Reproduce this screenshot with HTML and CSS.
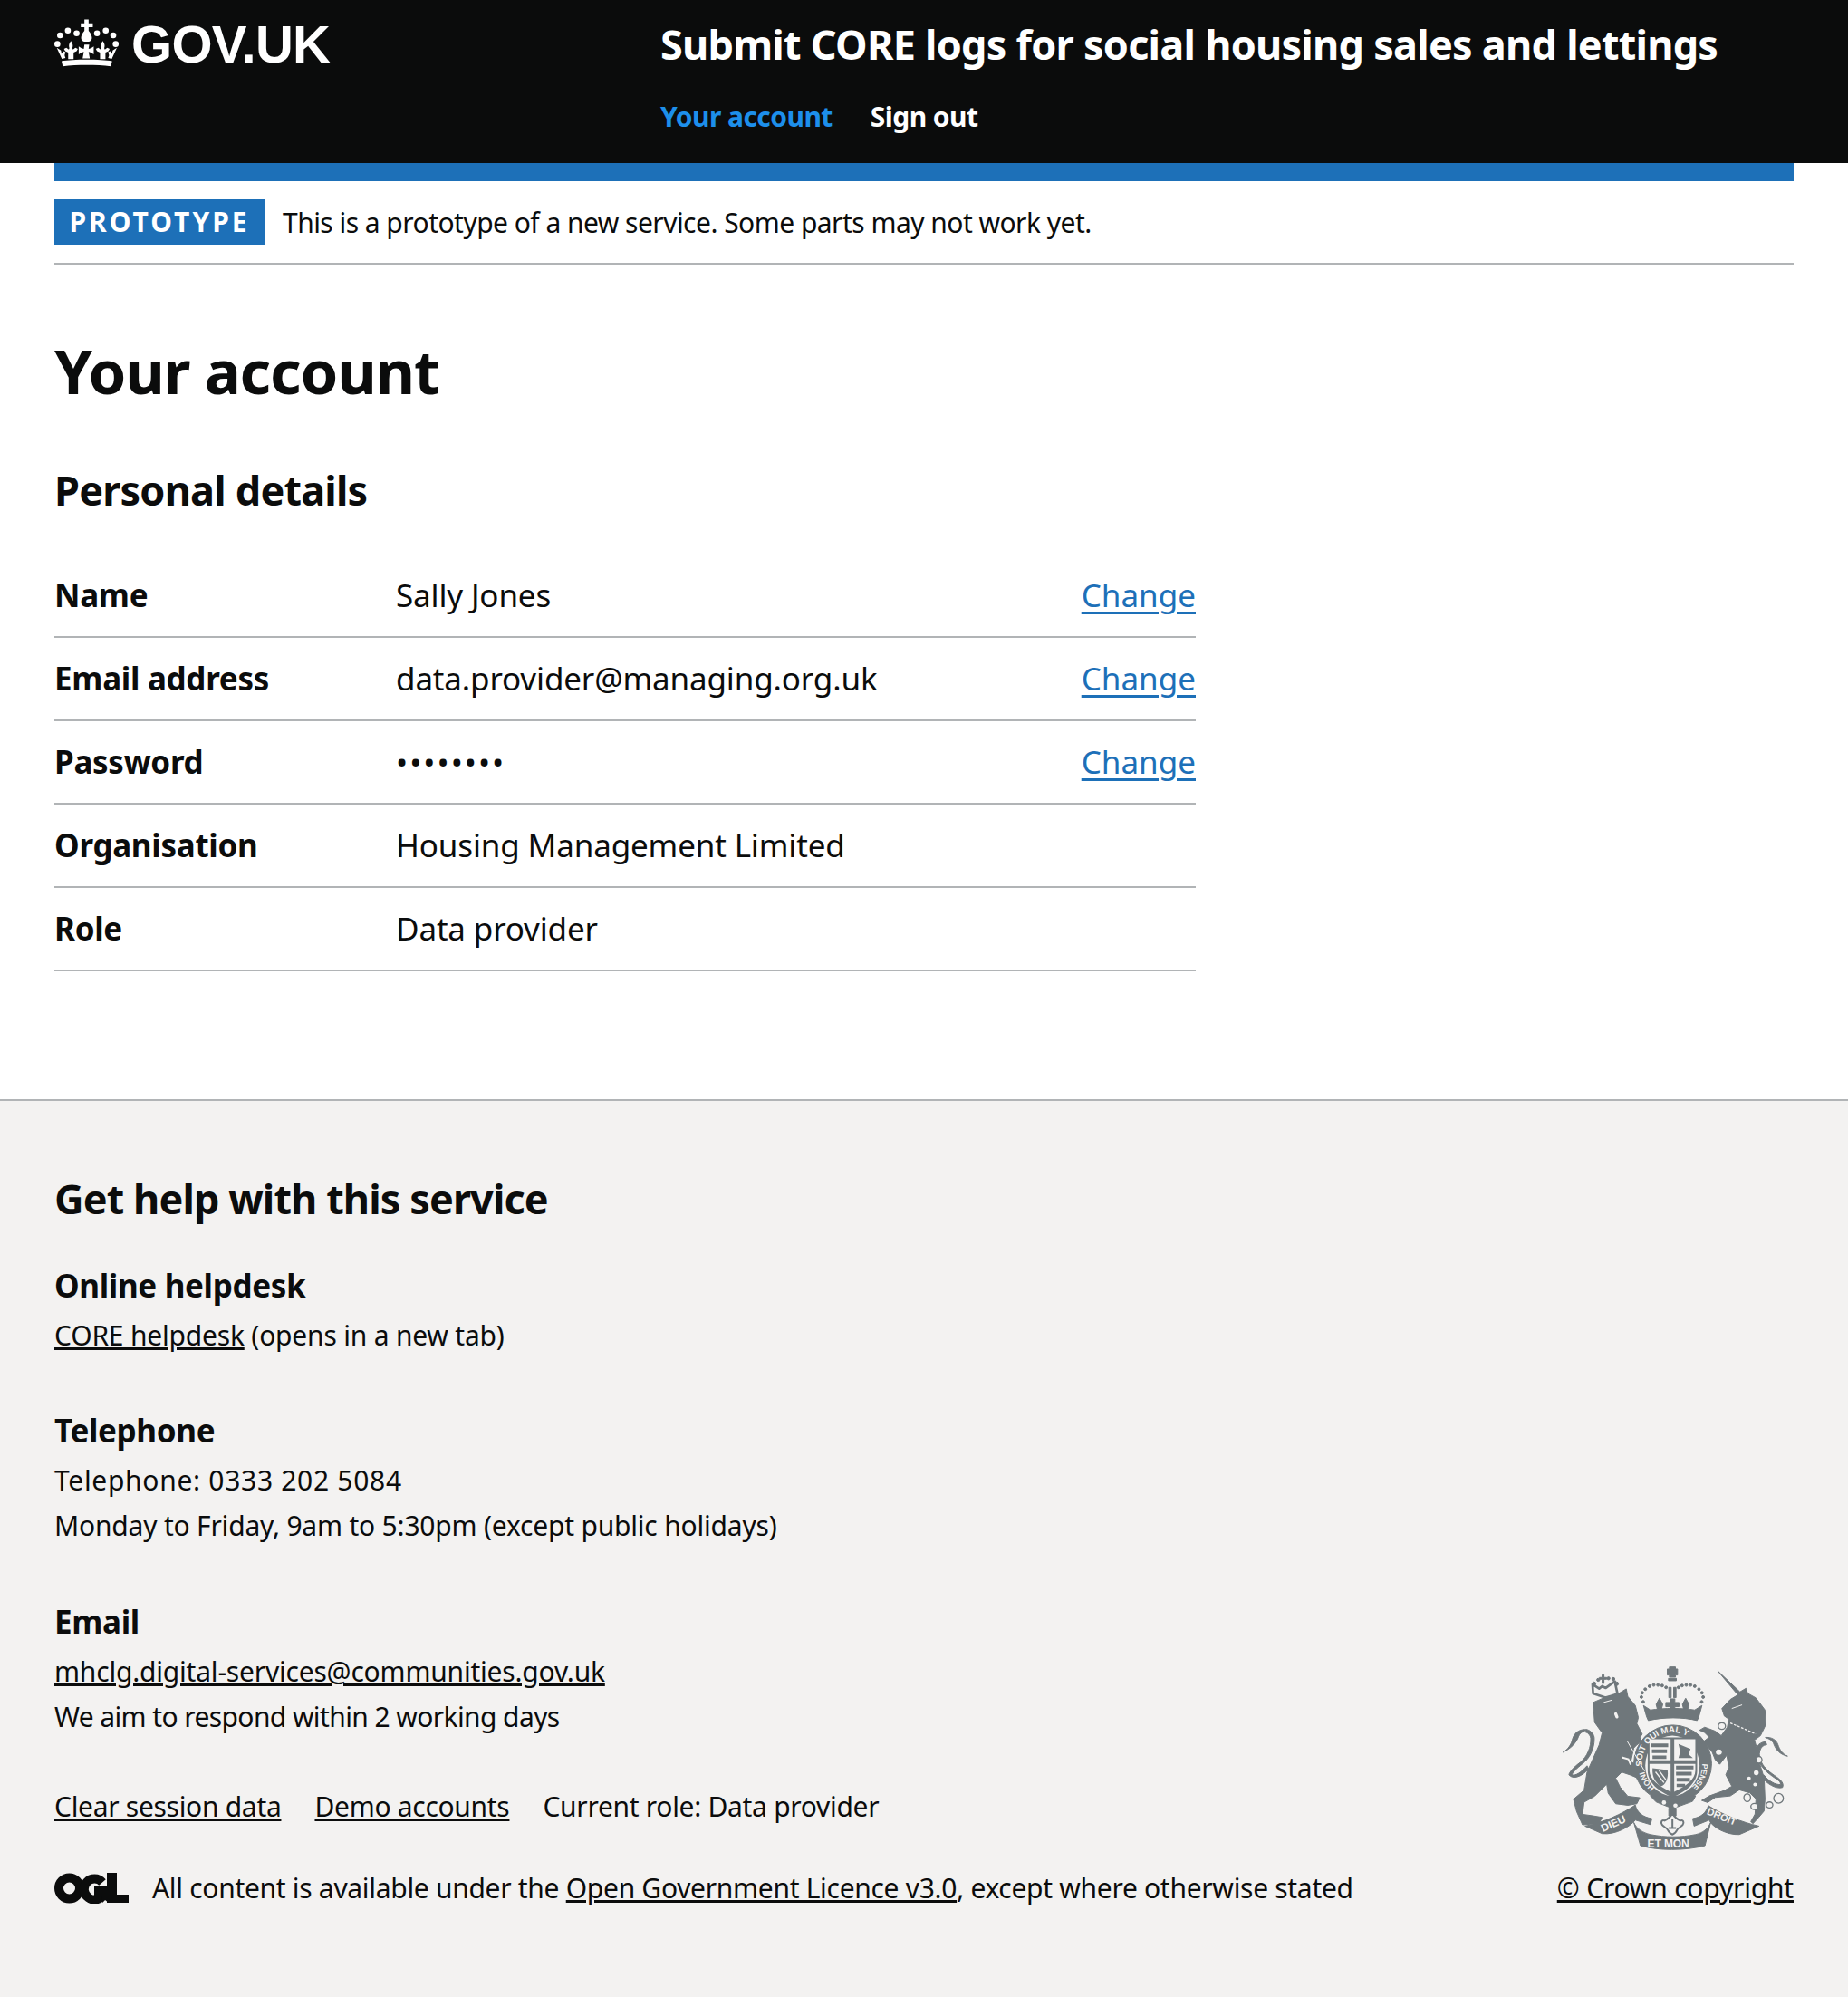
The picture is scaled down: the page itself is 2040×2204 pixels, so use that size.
FILE: index.html
```html
<!DOCTYPE html>
<html lang="en">
<head>
<meta charset="UTF-8">
<title>Your account - Submit CORE logs</title>
<link rel="stylesheet" href="styles.css">
</head>
<body>

<header class="header">
  <a class="logo" href="#">
    <svg class="logo-crown" viewBox="60 62 220 162" width="73" height="54" aria-hidden="true">
      <g fill="#fff">
        <circle cx="70" cy="148" r="10"/><circle cx="79" cy="119" r="10"/><circle cx="105" cy="103" r="10"/><circle cx="134" cy="112" r="10"/>
        <circle cx="264" cy="148" r="10"/><circle cx="256" cy="119" r="10"/><circle cx="231" cy="103" r="10"/><circle cx="202" cy="112" r="10"/>
        <path d="M160 66h14v13h14v13h-14v12c7 8 11 16 11 24 0 7-6 12-11 12h-14c-5 0-11-5-11-12 0-8 4-16 11-24V92h-12V79h12z"/>
        <path d="M88 222l-4-17c38-7 130-7 168 0l-4 17c-48-6-112-6-160 0z"/>
        <path d="M68 160l14 9 2 12 6-9 7 3-3 10 3 9-12 3z"/>
        <path d="M268 160l-14 9-2 12-6-9-7 3 3 10-3 9 12 3z"/>
        <path d="M115 138c6 8 8 14 5 24l2 4 8-6 8 4-4 8-10 4v22h-18v-22l-10-4-4-8 8-4 8 6 2-4c-3-10-1-16 5-24z"/>
        <path d="M221 138c-6 8-8 14-5 24l-2 4-8-6-8 4 4 8 10 4v22h18v-22l10-4 4-8-8-4-8 6-2-4c3-10 1-16-5-24z"/>
        <path d="M160 150h16l-2 14 8-2 9-6v26l-9-6-8-2 4 22h-24l4-22-8 2-9 6v-26l9 6 8 2z"/>
      </g>
    </svg>
    <span class="logo-text">GOV.UK</span>
  </a>
  <div class="service">
    <a class="service-name" href="#">Submit CORE logs for social housing sales and lettings</a>
    <nav class="service-nav">
      <a class="nav-current" href="#">Your account</a>
      <a href="#">Sign out</a>
    </nav>
  </div>
</header>

<div class="width-container">
  <div class="blue-bar"></div>
  <div class="phase-banner">
    <strong class="tag">PROTOTYPE</strong>
    <span>This is a prototype of a new service. Some parts may not work yet.</span>
  </div>

  <main>
    <h1 class="title">Your account</h1>
    <h2 class="subtitle">Personal details</h2>
    <dl class="summary">
      <div class="summary-row">
        <dt>Name</dt>
        <dd>Sally Jones</dd>
        <dd class="summary-action"><a href="#">Change</a></dd>
      </div>
      <div class="summary-row">
        <dt>Email address</dt>
        <dd>data.provider@managing.org.uk</dd>
        <dd class="summary-action"><a href="#">Change</a></dd>
      </div>
      <div class="summary-row">
        <dt>Password</dt>
        <dd class="password">••••••••</dd>
        <dd class="summary-action"><a href="#">Change</a></dd>
      </div>
      <div class="summary-row">
        <dt>Organisation</dt>
        <dd>Housing Management Limited</dd>
        <dd class="summary-action"></dd>
      </div>
      <div class="summary-row">
        <dt>Role</dt>
        <dd>Data provider</dd>
        <dd class="summary-action"></dd>
      </div>
    </dl>
  </main>
</div>

<footer class="footer">
  <div class="footer-inner">
    <h2 class="footer-title">Get help with this service</h2>

    <h3 class="footer-heading">Online helpdesk</h3>
    <p><a href="#">CORE helpdesk</a> (opens in a new tab)</p>

    <h3 class="footer-heading gap-tel">Telephone</h3>
    <p class="phone">Telephone: 0333 202 5084</p>
    <p>Monday to Friday, 9am to 5:30pm (except public holidays)</p>

    <h3 class="footer-heading gap-email">Email</h3>
    <p><a href="#">mhclg.digital-services@communities.gov.uk</a></p>
    <p class="tight">We aim to respond within 2 working days</p>

    <div class="footer-bottom">
      <div class="footer-meta">
        <ul class="meta-links">
          <li><a href="#">Clear session data</a></li>
          <li><a href="#">Demo accounts</a></li>
          <li>Current role: Data provider</li>
        </ul>
        <div class="licence">
          <svg class="ogl" viewBox="0 0 82 34" width="82" height="34" aria-hidden="true">
            <circle cx="16.5" cy="17" r="11.5" fill="none" stroke="#0b0c0c" stroke-width="10"/>
            <path d="M53 10.500a11.500 11.500 0 1 0 1.500 13" fill="none" stroke="#0b0c0c" stroke-width="10"/>
            <path d="M44 15h16v18l-4-3-3 3-1-8h-8z" fill="#0b0c0c"/>
            <path d="M58 0h11v24h13v9H58z" fill="#0b0c0c"/>
          </svg>
          <span>All content is available under the <a href="#">Open Government Licence v3.0</a>, except where otherwise stated</span>
        </div>
      </div>
      <div class="crown-copyright">
        <svg class="arms" viewBox="98 55 760 620" width="253" height="207" aria-hidden="true">
          <g class="arms-fill">
            <!-- lion -->
            <path d="M205 180l35-15 50-15 25-15 5 25 25 30 10 40-5 20 18 35-8 12 6 12-16 12-10 10-10 45 15 10 30 35-10 15-35-15-30-10-20 20 15 30 25 30 40 5-10 20-30 5-40-5-25-35-5-30-40 40-35 20-5 40 35 5 30 5-10 20-55 5-20-45-10-40 35-30 10-60 40-90 10-40-25-35z"/>
            <path d="M205 150l-2-30 22 14 10-8 12 6 30-22 5 24 4 18-40 12z" fill="none" stroke-width="8"/>
            <path d="M235 88h6v9h9v6h-9v14h-6v-14h-9v-6h9z"/>
            <circle cx="208" cy="118" r="6"/><circle cx="222" cy="105" r="5"/><circle cx="256" cy="100" r="5"/><circle cx="272" cy="102" r="5"/><circle cx="283" cy="118" r="6"/>
            <!-- lion tail -->
            <path d="M105 345c15-8 28-24 32-45 8-26 30-32 48-30-10 6-22 8-28 22-8 24-28 42-52 53z"/>
            <path d="M190 400c-25 30-55 35-65 20 0-8 15-25 38-42 22-18 36-50 34-80-1-8-8-18-18-20l6-8c14 4 24 16 24 30 0 36-16 66-40 84-20 16-32 28-34 36 12 4 30-8 50-30z"/>
            <!-- crown over the shield -->
            <path d="M458 62h20v7h7v20h-7v7h-20v-7h-7v-20h7z"/>
            <path d="M455 100h26v8h-26zM456 130h8v34h-8zM472 130h8v34h-8z"/>
            <path d="M388 240c-8-15-10-30-16-50l23 15c45-7 105-7 147 0l24-15c-6 20-8 35-16 50-48-12-110-12-162 0z"/>
            <path d="M425 166l11 20-4 16h-14l-4-16zM512 166l11 20-4 16h-14l-4-16z"/>
            <path d="M460 168h16v12h14v14h-14v8h-16v-8h-14v-14h14z"/>
            <circle cx="371" cy="178" r="4.500"/><circle cx="365" cy="162" r="4.500"/><circle cx="368" cy="148" r="4.500"/><circle cx="378" cy="136" r="4.500"/><circle cx="392" cy="126" r="4.500"/><circle cx="406" cy="122" r="4.500"/><circle cx="420" cy="122" r="4.500"/><circle cx="434" cy="124" r="4.500"/><circle cx="447" cy="130" r="4.500"/>
            <circle cx="565" cy="178" r="4.500"/><circle cx="570" cy="162" r="4.500"/><circle cx="566" cy="148" r="4.500"/><circle cx="556" cy="136" r="4.500"/><circle cx="542" cy="126" r="4.500"/><circle cx="528" cy="122" r="4.500"/><circle cx="514" cy="122" r="4.500"/><circle cx="500" cy="124" r="4.500"/><circle cx="488" cy="130" r="4.500"/>
            <!-- garter -->
            <ellipse cx="469" cy="383" rx="129" ry="128"/>
            <path d="M395 490h150l-10 18-66 24-55-22z"/>
            <path d="M456 530h24v26h-24z"/>
            <!-- unicorn -->
            <path d="M618 75l74 70 20-12 6 17 27 15 30 40 2 50-17 35-20 15 12 40 6 40 14 45 3 70-3 40-17 20-20 22-7-7 14-25 3-50-20-20-35-10-30 20-50 5-25 17-20-7 25-15 50-18 25-14-20-38 10-25-7-40-23 30-15-15-10-25-20-25-20-2 30-23-15-15-17-8 17-10 35 13 20 15 20-28 5-27-15-10-8-25 28-30 25-15z"/>
            <!-- unicorn tail -->
            <path d="M850 358c-16-6-26-20-32-38-6-18-24-26-42-24 10 4 24 8 28 22 8 22 24 36 46 40z"/>
            <path d="M752 372c10 22 30 42 58 60 12 8 18 14 16 20-16 2-40-12-55-32l-8 6c18 24 48 42 70 36 6-12-4-24-18-34-24-16-42-30-52-50-12-22-8-56 18-58l-4-10c-36 4-44 44-25 62z"/>
            <!-- ribbon -->
            <path d="M178 590l57 25c45 5 95-25 110-45l50 15 5-20c-30-5-50-20-55-45-45 30-105 58-167 70z"/>
            <path d="M755 590l-65 28c-40 2-90-23-100-48l-50 20-5-25c30-5 45-20 52-43 43 28 113 56 168 68z"/>
            <path d="M340 578c10 22 30 34 55 40 50 10 100 10 150 0 25-6 40-18 50-40l-19 77c-66 17-156 17-214 0z"/>
          </g>
          <!-- shield and lettering, over the dark shapes -->
          <ellipse cx="468" cy="390" rx="90" ry="100" fill="#f3f2f1"/>
          <path d="M386 296h164v110c0 40-35 68-82 88-47-20-82-48-82-88z" fill="#6f777b"/>
          <path d="M392 302h70v70h-70zM474 302h70v70h-70zM392 384h70v92c-36-18-70-40-70-70zM474 384h70v22c0 30-34 52-70 70z" fill="#f3f2f1"/>
          <g fill="#6f777b">
            <path d="M398 316h56v12h-56zM400 336h50v12h-50zM402 356h46v11h-46z"/>
            <path d="M480 390h58v12h-58zM480 410h52v12h-52zM482 430h44v12h-44zM482 450h28v10h-28z"/>
            <path d="M488 318l40 16-6 18 14 12h-48l6-20z"/>
            <path d="M402 398l50 6c4 30-8 50-22 54-18-12-30-30-28-60z"/>
          </g>
          <g fill="none" stroke="#f3f2f1">
            <path d="M412 410l28 36M424 406l22 30" stroke-width="4"/>
            <path d="M280 218l4 10" stroke-width="10" stroke-linecap="round"/>
            <path d="M240 180l28-8" stroke-width="3"/>
            <path d="M665 200l34-12" stroke-width="3"/>
            <path d="M660 248l84 36" stroke-width="4" stroke-dasharray="8 5"/>
            <path d="M318 308l58 100" stroke-width="3"/>
            <path d="M300 362l22 6 8 18" stroke-width="6"/>
          </g>
          <g class="chain">
            <ellipse cx="632" cy="258" rx="12" ry="11"/>
            <ellipse cx="622" cy="345" rx="12" ry="11"/>
            <ellipse cx="755" cy="370" rx="10" ry="11"/>
            <ellipse cx="716" cy="496" rx="11" ry="13"/>
            <ellipse cx="740" cy="525" rx="12" ry="10"/>
            <ellipse cx="790" cy="520" rx="11" ry="10"/>
            <circle cx="820" cy="498" r="16"/>
          </g>
          <circle cx="746" cy="413" r="8" fill="#f3f2f1"/>
          <circle cx="722" cy="432" r="6" fill="#f3f2f1"/>
          <circle cx="742" cy="452" r="6" fill="#f3f2f1"/>
          <circle cx="440" cy="512" r="7" fill="#f3f2f1"/>
          <circle cx="478" cy="522" r="7" fill="#f3f2f1"/>
          <!-- fleur under the garter -->
          <path d="M468 548c8 14 18 20 26 24 10-4 14 6 8 14-4 6-14 8-18 16-4 8-10 14-16 16-6-2-12-8-16-16-4-8-14-10-18-16-6-8-2-18 8-14 8-4 18-10 26-24z" fill="#f3f2f1" stroke="#6f777b" stroke-width="6"/>
          <path d="M468 565v28M456 596h24" stroke="#6f777b" stroke-width="6" fill="none"/>
          <defs>
            <path id="arm-top" d="M368 392a101 101 0 0 1 200-28"/>
            <path id="arm-right" d="M567 383a98 98 0 0 1-60 92"/>
            <path id="arm-left" d="M410 462a98 98 0 0 1-38-72"/>
          </defs>
          <g class="arms-text">
            <text font-size="29"><textPath href="#arm-top">SOIT QUI MAL Y</textPath></text>
            <text font-size="26"><textPath href="#arm-right">PENSE</textPath></text>
            <text font-size="26"><textPath href="#arm-left">HONI</textPath></text>
            <text font-size="36" x="238" y="610" transform="rotate(-24 238 610)">DIEU</text>
            <text font-size="36" x="385" y="660">ET MON</text>
            <text font-size="33" x="580" y="550" transform="rotate(22 580 550)">DROIT</text>
          </g>
        </svg>
        <a href="#">© Crown copyright</a>
      </div>
    </div>
  </div>
</footer>

</body>
</html>
```

FILE: styles.css
```css
body {
  margin: 0;
  font-family: "Noto Sans", "Open Sans", sans-serif;
  color: #0b0c0c;
  background-color: #fff;
}

a {
  color: inherit;
}

/* header */
.header {
  display: flex;
  height: 180px;
  padding: 0 60px;
  background-color: #0b0c0c;
  color: #fff;
}

.logo {
  display: flex;
  align-items: flex-start;
  width: 669px;
  padding-top: 20px;
  color: #fff;
  text-decoration: none;
}

.logo-crown {
  flex: none;
  margin-right: 12px;
}

.logo-text {
  font-family: "Liberation Sans", Arial, sans-serif;
  font-size: 58px;
  font-weight: 700;
  line-height: 58px;
  letter-spacing: -0.7px;
}

.service-name {
  display: block;
  margin-top: 20px;
  font-size: 45px;
  font-weight: 700;
  line-height: 58px;
  letter-spacing: -0.75px;
  color: #fff;
  text-decoration: none;
}

.service-nav {
  display: flex;
  gap: 42px;
  margin-top: 31px;
  font-size: 30px;
  font-weight: 700;
  line-height: 40px;
  letter-spacing: -0.55px;
}

.service-nav a {
  color: #fff;
  text-decoration: none;
}

.service-nav .nav-current {
  color: #1d8feb;
}

/* top of page */
.width-container {
  padding: 0 60px;
}

.blue-bar {
  height: 20px;
  background-color: #1d70b8;
}

.phase-banner {
  display: flex;
  align-items: center;
  gap: 20px;
  height: 90px;
  border-bottom: 2px solid #b1b4b6;
  font-size: 30px;
  letter-spacing: -0.53px;
}

.tag {
  width: 232px;
  height: 50px;
  background-color: #1d70b8;
  color: #fff;
  font-size: 30px;
  line-height: 50px;
  letter-spacing: 3px;
  text-align: center;
}

/* main */
.title {
  margin: 72px 0 0;
  font-size: 67px;
  font-weight: 700;
  line-height: 90px;
  letter-spacing: -1.15px;
}

.subtitle {
  margin: 57px 0 0;
  font-size: 45px;
  font-weight: 700;
  line-height: 60px;
  letter-spacing: -0.8px;
}

.summary {
  width: 1260px;
  margin: 41px 0 0;
  padding-bottom: 141px;
  font-size: 35px;
  line-height: 90px;
}

.summary-row {
  display: flex;
  border-bottom: 2px solid #b1b4b6;
}

.summary-row dt {
  width: 377px;
  font-weight: 700;
  letter-spacing: -0.3px;
}

.summary-row dd {
  margin: 0;
  flex: 1;
  letter-spacing: -0.15px;
}

.summary-row .password {
  letter-spacing: 2px;
}

.summary-row .summary-action {
  flex: none;
  width: 200px;
  letter-spacing: 0;
  text-align: right;
}

.summary-action a {
  color: #1d70b8;
  text-underline-offset: 5px;
}

/* footer */
.footer {
  height: 991px;
  box-sizing: border-box;
  border-top: 2px solid #b1b4b6;
  background-color: #f3f2f1;
  font-size: 30px;
}

.footer-inner {
  padding: 78px 60px 0;
}

.footer-inner p {
  margin: 0;
  line-height: 50px;
  letter-spacing: -0.2px;
}

.footer-inner .phone {
  letter-spacing: 0.7px;
}

.footer-inner .tight {
  letter-spacing: -0.6px;
}

.footer-title {
  margin: 0 0 41px;
  font-size: 45px;
  font-weight: 700;
  line-height: 60px;
  letter-spacing: -0.9px;
}

.footer-heading {
  margin: 0 0 5px;
  font-size: 35px;
  font-weight: 700;
  line-height: 50px;
  letter-spacing: -0.35px;
}

.gap-tel {
  margin-top: 55px;
}

.gap-email {
  margin-top: 56px;
}

.footer-bottom {
  display: flex;
  justify-content: space-between;
  align-items: flex-end;
  margin-top: -83px;
}

.footer-meta {
  flex: 1;
}

.meta-links {
  display: flex;
  gap: 37px;
  margin: 0 0 40px;
  padding: 0;
  line-height: 50px;
  letter-spacing: -0.3px;
  list-style: none;
}

.licence {
  display: flex;
  align-items: center;
  gap: 26px;
  line-height: 50px;
  letter-spacing: -0.3px;
}

.ogl {
  flex: none;
}

.crown-copyright {
  display: flex;
  flex-direction: column;
  align-items: center;
  line-height: 50px;
  letter-spacing: -0.2px;
}

.arms {
  display: block;
  margin-bottom: 15px;
}

.arms-fill {
  fill: #6f777b;
  stroke: #6f777b;
  stroke-width: 3;
  stroke-linejoin: round;
}

.chain {
  fill: #f3f2f1;
  stroke: #6f777b;
  stroke-width: 4;
}

.arms-text {
  font-family: "Liberation Sans", sans-serif;
  font-weight: 700;
  fill: #f3f2f1;
}
```
